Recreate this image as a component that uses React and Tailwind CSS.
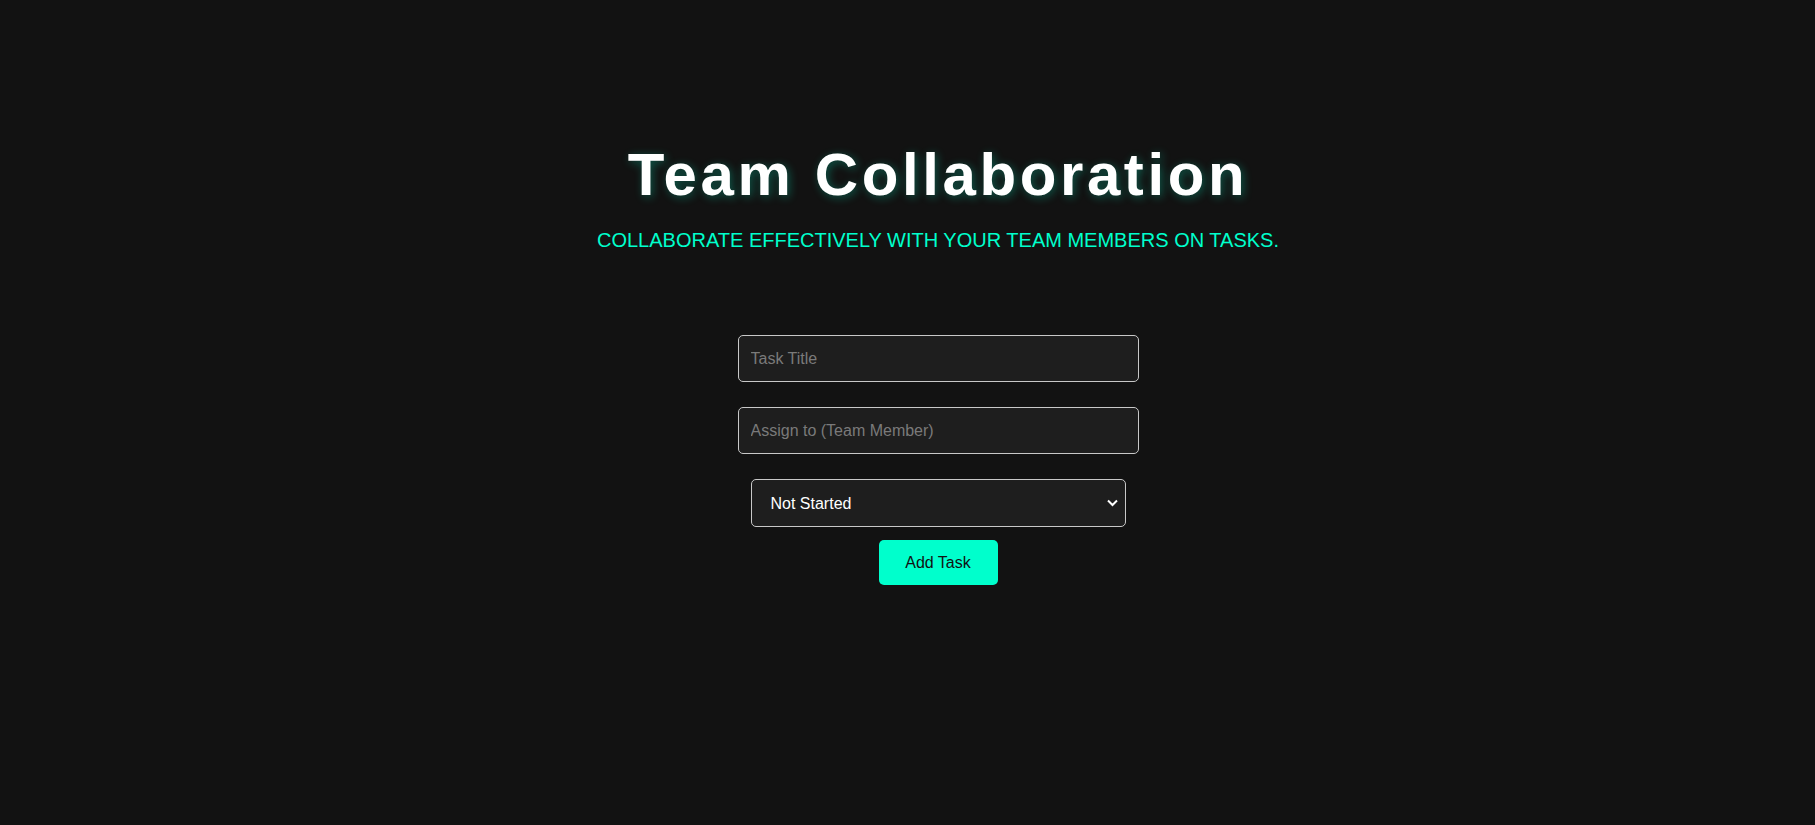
// Team collaboration page: title, tagline and the add-task form.
import { useState } from "react";

export default function App() {
    const [title, setTitle] = useState("");
    const [assignee, setAssignee] = useState("");
    const [status, setStatus] = useState("Not Started");

    return (
        <div className="min-h-screen bg-[#121212] text-white font-['Liberation_Sans',Arial,sans-serif] pl-[61px]">
            <div className="flex flex-col items-center pt-[145px]">
                {/* Header */}
                <h1 className="text-[60px] leading-[60px] font-bold tracking-[3.6px] text-white [text-shadow:2px_2px_10px_rgba(0,255,204,0.3)]">
                    Team Collaboration
                </h1>
                <p className="mt-[21px] text-[20px] leading-[28px] uppercase text-[#00ffcc]">
                    Collaborate effectively with your team members on tasks.
                </p>

                {/* Task form */}
                <form
                    className="mt-[81px] flex flex-col items-center"
                    onSubmit={(event) => event.preventDefault()}
                >
                    <input
                        type="text"
                        value={title}
                        onChange={(event) => setTitle(event.target.value)}
                        placeholder="Task Title"
                        className="w-[401px] h-[47px] px-[12px] rounded-[5px] border border-[#c8c8c8] bg-[#1e1e1e] text-[16px] text-white placeholder:text-[#7a7a7a] outline-none"
                    />
                    <input
                        type="text"
                        value={assignee}
                        onChange={(event) => setAssignee(event.target.value)}
                        placeholder="Assign to (Team Member)"
                        className="mt-[25px] w-[401px] h-[47px] px-[12px] rounded-[5px] border border-[#c8c8c8] bg-[#1e1e1e] text-[16px] text-white placeholder:text-[#7a7a7a] outline-none"
                    />
                    <div className="relative mt-[25px]">
                        <select
                            value={status}
                            onChange={(event) => setStatus(event.target.value)}
                            className="appearance-none w-[375px] h-[48px] pl-[19px] pr-[30px] pt-[2px] rounded-[5px] border border-[#c8c8c8] bg-[#1e1e1e] text-[16px] text-white outline-none"
                        >
                            <option>Not Started</option>
                            <option>In Progress</option>
                            <option>Completed</option>
                        </select>
                        {/* Chevron */}
                        <svg
                            className="pointer-events-none absolute right-[8px] top-[20px] w-[11px] h-[8px]"
                            viewBox="0 0 11 8"
                            fill="none"
                            stroke="white"
                            strokeWidth="2"
                        >
                            <path d="M1 1.5 5.5 6 10 1.5" />
                        </svg>
                    </div>
                    <button
                        type="submit"
                        className="mt-[13px] w-[119px] h-[45px] rounded-[5px] bg-[#00ffcc] text-[16px] text-[#121212] cursor-pointer"
                    >
                        Add Task
                    </button>
                </form>
            </div>
        </div>
    );
}
